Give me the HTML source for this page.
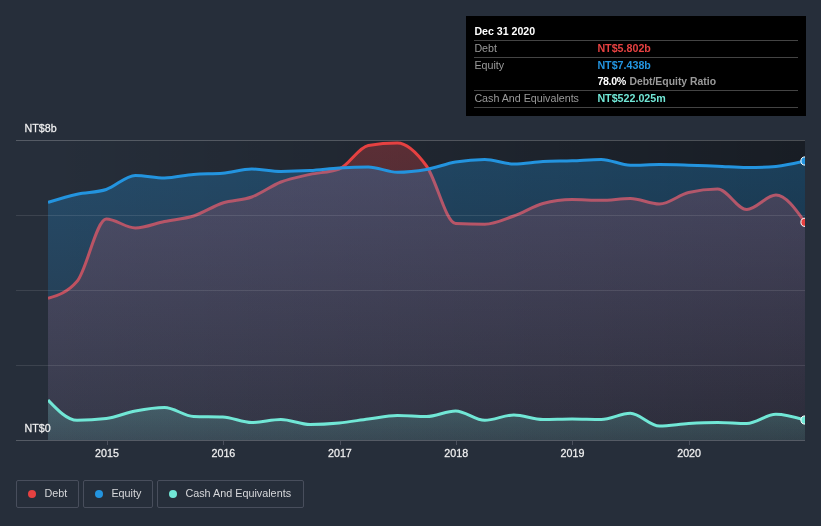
<!DOCTYPE html>
<html><head><meta charset="utf-8"><title>Debt to Equity History</title>
<style>
html,body{margin:0;padding:0;background:#262e3a;}
body{width:821px;height:526px;overflow:hidden;position:relative;font-family:"Liberation Sans", Arial, sans-serif;}
svg{position:absolute;left:0;top:0;display:block}
svg.tx{will-change:transform}
svg text{font-family:"Liberation Sans", Arial, sans-serif;stroke:#f2f2f3;stroke-width:0.3px;stroke-opacity:0.8}
.tip{will-change:transform;position:absolute;left:466px;top:16px;width:340px;height:100px;background:#000;}
.tip div{position:absolute;white-space:nowrap;font-size:10.7px;line-height:13px;}
.tip .ln{left:8px;width:324px;height:1px;background:#444;}
.lab{color:#9a9a9a;left:8.4px}
.val{left:131.4px;font-weight:bold;font-size:10.7px}
.leg{will-change:transform;position:absolute;top:480px;height:26px;border:1px solid #484e5c;border-radius:2px;box-sizing:content-box}
.leg i{position:absolute;left:11px;top:8.5px;width:8px;height:8px;border-radius:50%;}
.leg span{position:absolute;left:27.4px;top:6px;font-size:10.8px;line-height:13px;color:#d6d7da;white-space:nowrap}
</style></head><body>
<svg width="821" height="526" viewBox="0 0 821 526">
<defs>
<linearGradient id="pg" x1="0" y1="0" x2="1" y2="0"><stop offset="0" stop-color="#000" stop-opacity="0"/><stop offset="1" stop-color="#000" stop-opacity="0.37"/></linearGradient>
<linearGradient id="gd" x1="0" y1="140" x2="0" y2="440" gradientUnits="userSpaceOnUse"><stop offset="0" stop-color="#e64141" stop-opacity="0.30"/><stop offset="1" stop-color="#e64141" stop-opacity="0.09"/></linearGradient>
<linearGradient id="ge" x1="0" y1="140" x2="0" y2="440" gradientUnits="userSpaceOnUse"><stop offset="0" stop-color="#2394df" stop-opacity="0.30"/><stop offset="1" stop-color="#2394df" stop-opacity="0.09"/></linearGradient>
<linearGradient id="gc" x1="0" y1="400" x2="0" y2="440" gradientUnits="userSpaceOnUse"><stop offset="0" stop-color="#71e7d6" stop-opacity="0.22"/><stop offset="1" stop-color="#71e7d6" stop-opacity="0.12"/></linearGradient>
<clipPath id="cp"><rect x="48" y="130" width="757" height="320"/></clipPath>
</defs>
<rect x="48" y="140" width="757" height="300" fill="url(#pg)"/>
<g clip-path="url(#cp)">
<path d="M48.00,298.30C57.71,295.47 67.41,292.63 77.12,281.30C86.82,269.97 96.53,219.00 106.23,219.00C115.94,219.00 125.64,228.00 135.35,228.00C145.05,228.00 154.76,223.50 164.46,221.50C174.17,219.50 183.87,219.08 193.58,216.00C203.28,212.92 212.99,206.17 222.69,203.00C232.40,199.83 242.10,200.50 251.81,197.00C261.51,193.50 271.22,185.77 280.92,182.00C290.63,178.23 300.33,176.57 310.04,174.40C319.74,172.23 329.45,172.60 339.15,169.00C348.86,165.40 358.56,147.00 368.27,145.40C377.97,143.80 387.68,143.00 397.38,143.00C407.09,143.00 416.79,152.58 426.50,166.00C436.21,179.42 445.91,222.97 455.62,223.50C465.32,224.03 475.03,224.30 484.73,224.30C494.44,224.30 504.14,219.47 513.85,216.00C523.55,212.53 533.26,206.17 542.96,203.50C552.67,200.83 562.37,199.50 572.08,199.50C581.78,199.50 591.49,200.30 601.19,200.30C610.90,200.30 620.60,198.50 630.31,198.50C640.01,198.50 649.72,204.00 659.42,204.00C669.13,204.00 678.83,194.83 688.54,192.50C698.24,190.17 707.95,189.00 717.65,189.00C727.36,189.00 737.06,209.50 746.77,209.50C756.47,209.50 766.18,195.00 775.88,195.00C785.59,195.00 795.29,208.65 805.00,222.30L805.00,440L48.00,440Z" fill="url(#gd)"/>
<path d="M48.00,298.30C57.71,295.47 67.41,292.63 77.12,281.30C86.82,269.97 96.53,219.00 106.23,219.00C115.94,219.00 125.64,228.00 135.35,228.00C145.05,228.00 154.76,223.50 164.46,221.50C174.17,219.50 183.87,219.08 193.58,216.00C203.28,212.92 212.99,206.17 222.69,203.00C232.40,199.83 242.10,200.50 251.81,197.00C261.51,193.50 271.22,185.77 280.92,182.00C290.63,178.23 300.33,176.57 310.04,174.40C319.74,172.23 329.45,172.60 339.15,169.00C348.86,165.40 358.56,147.00 368.27,145.40C377.97,143.80 387.68,143.00 397.38,143.00C407.09,143.00 416.79,152.58 426.50,166.00C436.21,179.42 445.91,222.97 455.62,223.50C465.32,224.03 475.03,224.30 484.73,224.30C494.44,224.30 504.14,219.47 513.85,216.00C523.55,212.53 533.26,206.17 542.96,203.50C552.67,200.83 562.37,199.50 572.08,199.50C581.78,199.50 591.49,200.30 601.19,200.30C610.90,200.30 620.60,198.50 630.31,198.50C640.01,198.50 649.72,204.00 659.42,204.00C669.13,204.00 678.83,194.83 688.54,192.50C698.24,190.17 707.95,189.00 717.65,189.00C727.36,189.00 737.06,209.50 746.77,209.50C756.47,209.50 766.18,195.00 775.88,195.00C785.59,195.00 795.29,208.65 805.00,222.30" fill="none" stroke="#e64141" stroke-width="3" stroke-linejoin="round"/>
<path d="M48.00,202.40C57.71,199.38 67.41,196.35 77.12,194.20C86.82,192.05 96.53,192.63 106.23,189.50C115.94,186.37 125.64,175.40 135.35,175.40C145.05,175.40 154.76,178.00 164.46,178.00C174.17,178.00 183.87,175.20 193.58,174.40C203.28,173.60 212.99,174.00 222.69,173.20C232.40,172.40 242.10,169.00 251.81,169.00C261.51,169.00 271.22,171.40 280.92,171.40C290.63,171.40 300.33,171.13 310.04,170.60C319.74,170.07 329.45,168.60 339.15,168.00C348.86,167.40 358.56,167.00 368.27,167.00C377.97,167.00 387.68,172.20 397.38,172.20C407.09,172.20 416.79,171.10 426.50,169.40C436.21,167.70 445.91,163.67 455.62,162.00C465.32,160.33 475.03,159.40 484.73,159.40C494.44,159.40 504.14,164.00 513.85,164.00C523.55,164.00 533.26,162.13 542.96,161.60C552.67,161.07 562.37,161.17 572.08,160.80C581.78,160.43 591.49,159.40 601.19,159.40C610.90,159.40 620.60,165.20 630.31,165.20C640.01,165.20 649.72,164.60 659.42,164.60C669.13,164.60 678.83,164.93 688.54,165.20C698.24,165.47 707.95,165.80 717.65,166.20C727.36,166.60 737.06,167.60 746.77,167.60C756.47,167.60 766.18,167.20 775.88,166.40C785.59,165.60 795.29,163.30 805.00,161.00L805.00,440L48.00,440Z" fill="url(#ge)"/>
<path d="M48.00,202.40C57.71,199.38 67.41,196.35 77.12,194.20C86.82,192.05 96.53,192.63 106.23,189.50C115.94,186.37 125.64,175.40 135.35,175.40C145.05,175.40 154.76,178.00 164.46,178.00C174.17,178.00 183.87,175.20 193.58,174.40C203.28,173.60 212.99,174.00 222.69,173.20C232.40,172.40 242.10,169.00 251.81,169.00C261.51,169.00 271.22,171.40 280.92,171.40C290.63,171.40 300.33,171.13 310.04,170.60C319.74,170.07 329.45,168.60 339.15,168.00C348.86,167.40 358.56,167.00 368.27,167.00C377.97,167.00 387.68,172.20 397.38,172.20C407.09,172.20 416.79,171.10 426.50,169.40C436.21,167.70 445.91,163.67 455.62,162.00C465.32,160.33 475.03,159.40 484.73,159.40C494.44,159.40 504.14,164.00 513.85,164.00C523.55,164.00 533.26,162.13 542.96,161.60C552.67,161.07 562.37,161.17 572.08,160.80C581.78,160.43 591.49,159.40 601.19,159.40C610.90,159.40 620.60,165.20 630.31,165.20C640.01,165.20 649.72,164.60 659.42,164.60C669.13,164.60 678.83,164.93 688.54,165.20C698.24,165.47 707.95,165.80 717.65,166.20C727.36,166.60 737.06,167.60 746.77,167.60C756.47,167.60 766.18,167.20 775.88,166.40C785.59,165.60 795.29,163.30 805.00,161.00" fill="none" stroke="#2394df" stroke-width="3" stroke-linejoin="round"/>
<path d="M48.00,400.00C57.71,410.15 67.41,420.30 77.12,420.30C86.82,420.30 96.53,419.70 106.23,418.50C115.94,417.30 125.64,412.83 135.35,411.00C145.05,409.17 154.76,407.50 164.46,407.50C174.17,407.50 183.87,416.17 193.58,416.50C203.28,416.83 212.99,416.67 222.69,417.00C232.40,417.33 242.10,422.50 251.81,422.50C261.51,422.50 271.22,419.50 280.92,419.50C290.63,419.50 300.33,424.50 310.04,424.50C319.74,424.50 329.45,423.92 339.15,423.00C348.86,422.08 358.56,420.25 368.27,419.00C377.97,417.75 387.68,415.50 397.38,415.50C407.09,415.50 416.79,416.50 426.50,416.50C436.21,416.50 445.91,410.90 455.62,410.90C465.32,410.90 475.03,420.30 484.73,420.30C494.44,420.30 504.14,415.00 513.85,415.00C523.55,415.00 533.26,419.50 542.96,419.50C552.67,419.50 562.37,419.00 572.08,419.00C581.78,419.00 591.49,419.50 601.19,419.50C610.90,419.50 620.60,413.30 630.31,413.30C640.01,413.30 649.72,426.00 659.42,426.00C669.13,426.00 678.83,424.08 688.54,423.50C698.24,422.92 707.95,422.50 717.65,422.50C727.36,422.50 737.06,423.50 746.77,423.50C756.47,423.50 766.18,414.30 775.88,414.30C785.59,414.30 795.29,417.15 805.00,420.00L805.00,440L48.00,440Z" fill="url(#gc)"/>
<path d="M48.00,400.00C57.71,410.15 67.41,420.30 77.12,420.30C86.82,420.30 96.53,419.70 106.23,418.50C115.94,417.30 125.64,412.83 135.35,411.00C145.05,409.17 154.76,407.50 164.46,407.50C174.17,407.50 183.87,416.17 193.58,416.50C203.28,416.83 212.99,416.67 222.69,417.00C232.40,417.33 242.10,422.50 251.81,422.50C261.51,422.50 271.22,419.50 280.92,419.50C290.63,419.50 300.33,424.50 310.04,424.50C319.74,424.50 329.45,423.92 339.15,423.00C348.86,422.08 358.56,420.25 368.27,419.00C377.97,417.75 387.68,415.50 397.38,415.50C407.09,415.50 416.79,416.50 426.50,416.50C436.21,416.50 445.91,410.90 455.62,410.90C465.32,410.90 475.03,420.30 484.73,420.30C494.44,420.30 504.14,415.00 513.85,415.00C523.55,415.00 533.26,419.50 542.96,419.50C552.67,419.50 562.37,419.00 572.08,419.00C581.78,419.00 591.49,419.50 601.19,419.50C610.90,419.50 620.60,413.30 630.31,413.30C640.01,413.30 649.72,426.00 659.42,426.00C669.13,426.00 678.83,424.08 688.54,423.50C698.24,422.92 707.95,422.50 717.65,422.50C727.36,422.50 737.06,423.50 746.77,423.50C756.47,423.50 766.18,414.30 775.88,414.30C785.59,414.30 795.29,417.15 805.00,420.00" fill="none" stroke="#71e7d6" stroke-width="3" stroke-linejoin="round"/>
</g>
<g fill="#fff" fill-opacity="0.1">
<rect x="16" y="215" width="789" height="1"/>
<rect x="16" y="290" width="789" height="1"/>
<rect x="16" y="365" width="789" height="1"/>
</g>
<rect x="16" y="140" width="789" height="1" fill="#fff" fill-opacity="0.22"/>
<rect x="16" y="440" width="789" height="1" fill="#fff" fill-opacity="0.22"/>
<g fill="#4a4f5c">
<rect x="107.0" y="441" width="1" height="4"/><rect x="223.0" y="441" width="1" height="4"/><rect x="340.0" y="441" width="1" height="4"/><rect x="456.0" y="441" width="1" height="4"/><rect x="572.0" y="441" width="1" height="4"/><rect x="689.0" y="441" width="1" height="4"/>
</g>
<g clip-path="url(#cp)" stroke="#fff" stroke-width="1">
<circle cx="805" cy="222.3" r="4.1" fill="#e64141"/>
<circle cx="805" cy="161" r="4.1" fill="#2394df"/>
<circle cx="805" cy="420" r="4.1" fill="#71e7d6"/>
</g>
</svg>
<svg class="tx" width="821" height="526" viewBox="0 0 821 526">
<g fill="#f2f2f3" font-size="10.7" font-weight="normal">
<text x="24.5" y="132">NT$8b</text>
<text x="24.5" y="432">NT$0</text>
<g text-anchor="middle">
<text x="107.0" y="456.5">2015</text><text x="223.4" y="456.5">2016</text><text x="339.9" y="456.5">2017</text><text x="456.2" y="456.5">2018</text><text x="572.5" y="456.5">2019</text><text x="689.1" y="456.5">2020</text>
</g>
</g>
</svg>
<div class="tip">
<div style="left:8.4px;top:9px;color:#fff;font-weight:bold;font-size:10.6px">Dec 31 2020</div>
<div class="ln" style="top:24px"></div>
<div class="lab" style="top:26px">Debt</div><div class="val" style="top:26px;color:#e64141">NT$5.802b</div>
<div class="ln" style="top:41px"></div>
<div class="lab" style="top:43px">Equity</div><div class="val" style="top:43px;color:#2394df">NT$7.438b</div>
<div class="val" style="top:59px;color:#fff;letter-spacing:-0.35px">78.0%</div><div class="val" style="top:59px;left:163.4px;color:#9a9a9a;font-size:10.4px">Debt/Equity Ratio</div>
<div class="ln" style="top:74px"></div>
<div class="lab" style="top:76px">Cash And Equivalents</div><div class="val" style="top:76px;color:#71e7d6">NT$522.025m</div>
<div class="ln" style="top:91px"></div>
</div>
<div class="leg" style="left:16px;width:61px"><i style="background:#e64141"></i><span>Debt</span></div>
<div class="leg" style="left:83px;width:68px"><i style="background:#2394df"></i><span>Equity</span></div>
<div class="leg" style="left:157px;width:145px"><i style="background:#71e7d6"></i><span>Cash And Equivalents</span></div>
</body></html>
